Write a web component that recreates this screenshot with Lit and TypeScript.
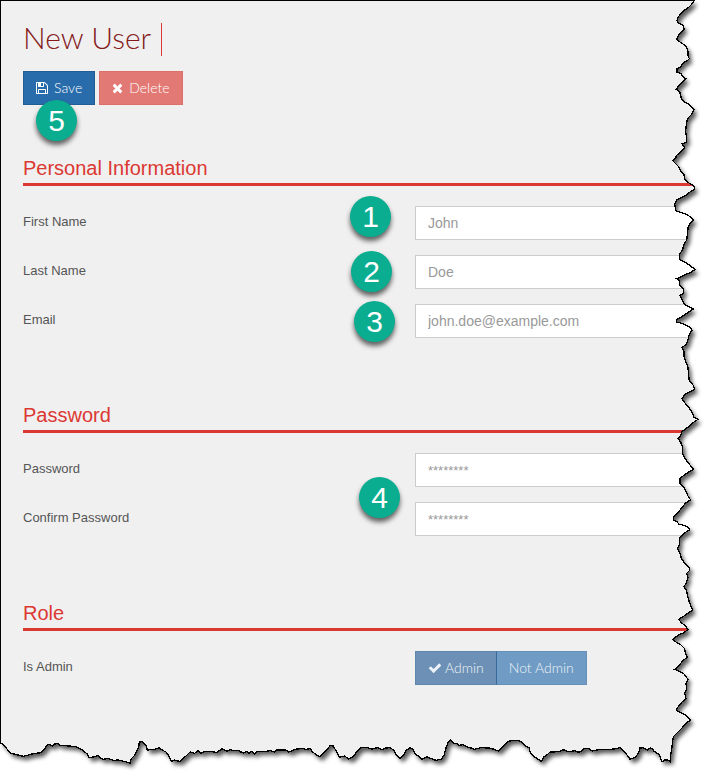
import { LitElement, html, css, svg } from "lit";
import { customElement, property, state } from "lit/decorators.js";

type IconName = "save" | "times" | "check";

const ICONS: Record<IconName, { width: number; path: string }> = {
  save: {
    width: 1536,
    path: "M384 0h768v384h-768v-384zM1280 0h128v896q0 14 -10 38.5t-20 34.5l-281 281q-10 10 -34 20t-39 10v-416q0 -40 -28 -68t-68 -28h-576q-40 0 -68 28t-28 68v416h-128v-1280h128v416q0 40 28 68t68 28h832q40 0 68 -28t28 -68v-416zM896 928v320q0 13 -9.5 22.5t-22.5 9.5h-192q-13 0 -22.5 -9.5t-9.5 -22.5v-320q0 -13 9.5 -22.5t22.5 -9.5h192q13 0 22.5 9.5t9.5 22.5zM1536 896v-928q0 -40 -28 -68t-68 -28h-1344q-40 0 -68 28t-28 68v1344q0 40 28 68t68 28h928q40 0 88 -20t76 -48l280 -280q28 -28 48 -76t20 -88z",
  },
  times: {
    width: 1408,
    path: "M1298 214q0 -40 -28 -68l-136 -136q-28 -28 -68 -28t-68 28l-294 294l-294 -294q-28 -28 -68 -28t-68 28l-136 136q-28 28 -28 68t28 68l294 294l-294 294q-28 28 -28 68t28 68l136 136q28 28 68 28t68 -28l294 -294l294 294q28 28 68 28t68 -28l136 -136q28 -28 28 -68t-28 -68l-294 -294l294 -294q28 -28 28 -68z",
  },
  check: {
    width: 1792,
    path: "M1671 970q0 -40 -28 -68l-724 -724l-136 -136q-28 -28 -68 -28t-68 28l-136 136l-362 362q-28 28 -28 68t28 68l136 136q28 28 68 28t68 -28l294 -295l656 657q28 28 68 28t68 -28l136 -136q28 -28 28 -68z",
  },
};

@customElement("glyph-icon")
class GlyphIcon extends LitElement {
  @property() name: IconName = "save";

  static styles = css`
    :host {
      display: inline-flex;
    }
    .glyph {
      height: 12px;
      fill: currentColor;
    }
  `;

  render() {
    const icon = ICONS[this.name];
    return html`<svg class="glyph" viewBox="0 -1408 ${icon.width} 1536" aria-hidden="true">
      <path transform="scale(1,-1)" d=${icon.path} />
    </svg>`;
  }
}

/* Outline of the torn sheet, in thirds of a pixel; each strip has its own origin. */
const STRIPS: { x: number; y: number; points: string }[] = [
  {
    x: 1962,
    y: 0,
    points:
      "120,1 114,12 104,22 90,32 78,44 72,52 69,62 74,70 88,76 90,88 78,100 70,112 69,120 78,126 90,134 99,144 102,154 102,168 106,176 100,182 90,186 80,200 69,206 69,216 82,222 86,230 96,236 86,246 76,256 66,268 76,274 80,284 82,298 92,306 106,314 120,328 114,342 102,354 98,366 96,384 94,396 98,408 98,426 84,432 92,442 82,454 68,466 64,476 56,482 66,492 74,500 80,514 90,524 92,536 100,546 120,558 122,568 108,576 96,586 80,594 68,600 62,614 66,632 82,638 100,644 120,660 108,670 102,684 100,704 98,720 90,732 86,748 76,764 76,776",
  },
  {
    x: 1962,
    y: 780,
    points:
      "78,0 96,8 110,18 124,29 108,38 90,46 68,56 76,62 76,74 88,86 88,100 78,106 84,118 90,132 104,140 118,147 104,156 92,164 78,174 68,178 68,186 84,190 96,196 110,202 114,212 106,222 102,240 96,254 84,262 90,274 90,290 96,306 102,322 104,346 106,362 118,376 122,388 106,396 92,404 84,416 92,428 106,444 116,460 120,472 132,478 120,486 106,498 94,508 84,514 80,526 72,536 80,546 86,562 86,580 92,594 104,610 112,620 118,628 104,636 90,646 78,654 78,670 88,680 96,694 102,708 110,720 96,728 84,742 72,758 58,770",
  },
  {
    x: 1962,
    y: 1560,
    points:
      "58,0 70,6 74,12 90,16 104,22 108,30 96,36 84,46 76,54 76,76 70,86 78,100 82,114 92,130 106,142 106,152 98,160 102,172 96,190 90,200 98,212 100,226 106,246 116,270 104,278 90,288 74,298 82,308 92,316 102,328 90,338 72,346 56,358 66,366 80,374 92,386 94,400 100,412 86,422 76,436 62,448 76,454 90,462 102,478 96,490 98,506 92,520 96,536 84,546 74,558 66,570 80,578 96,586 110,600 96,610 84,624 72,636 58,650 54,680 50,706",
  },
  {
    x: 1422,
    y: 2190,
    points:
      "588,95 582,90 572,90 564,95 556,74 540,64 536,56 528,54 520,60 508,53 498,54 494,68 484,82 468,88 460,76 448,62 438,53 426,56 412,58 380,58 368,60 354,63 344,56 330,56 322,64 312,67 304,62 292,64 280,65 270,59 256,64 240,66 228,66 220,74 210,80 202,94 192,88 176,76 168,66 166,54 154,48 140,34 130,31 120,31 104,34 92,44 82,54 74,63 60,58 46,54 20,53 0,58",
  },
  {
    x: 720,
    y: 2190,
    points:
      "700,56 680,50 668,44 656,46 650,40 640,40 632,29 624,38 618,54 612,76 604,87 588,91 574,86 560,80 546,88 538,80 526,74 520,58 510,53 498,62 490,76 480,85 470,76 462,60 448,53 438,54 426,60 412,53 396,57 382,53 362,53 350,66 340,80 326,87 314,78 298,82 290,66 280,48 270,47 262,58 250,70 240,81 228,74 216,64 212,56 196,58 186,55 166,58 156,63 146,66 138,60 126,60 108,60 104,66 92,62 76,64 50,64 44,72 36,64 26,70 20,64 12,69 0,65",
  },
  {
    x: 0,
    y: 2190,
    points:
      "718,62 700,62 690,58 682,64 666,56 650,68 634,64 616,64 604,70 594,62 584,70 570,66 558,78 546,88 540,95 524,90 514,94 508,80 498,66 486,60 478,53 464,58 442,60 438,46 426,35 418,36 416,52 404,76 394,86 390,100 376,95 356,90 340,91 324,85 310,88 298,82 294,76 284,80 266,83 262,72 244,58 228,50 206,48 180,46 174,40 164,42 158,48 150,44 142,44 136,54 122,68 96,72 70,79 50,74 30,69 22,58 8,42 2,40",
  },
];

const SHEET =
  "M1.5 1.5L" +
  STRIPS.map(({ x, y, points }) =>
    points
      .split(" ")
      .map((pair) => {
        const [px, py] = pair.split(",").map(Number);
        return `${x + px} ${y + py}`;
      })
      .join("L"),
  ).join("L") +
  "Z";

const OUTSIDE = `M-60 -60H2202V2400H-60Z${SHEET}`;

@customElement("torn-edge")
class TornEdge extends LitElement {
  static styles = css`
    :host {
      display: block;
      position: absolute;
      inset: 0;
      pointer-events: none;
    }
    .sheet {
      display: block;
      width: 100%;
      height: 100%;
    }
    .outside {
      fill: #fff;
      fill-rule: evenodd;
    }
    .outside-clip {
      clip-rule: evenodd;
    }
    .shadow {
      fill: #000;
      fill-opacity: 0.65;
    }
    .outline {
      fill: none;
      stroke: #000;
      stroke-width: 4;
      shape-rendering: crispEdges;
    }
  `;

  render() {
    return html`<svg class="sheet" viewBox="0 0 2142 2340" preserveAspectRatio="none" aria-hidden="true">
      ${svg`
        <defs>
          <clipPath id="outside"><path class="outside-clip" d=${OUTSIDE} /></clipPath>
          <filter id="soft" x="-5%" y="-5%" width="110%" height="110%">
            <feGaussianBlur stdDeviation="7" />
          </filter>
        </defs>
        <path class="outside" d=${OUTSIDE} />
        <g clip-path="url(#outside)">
          <path class="shadow" d=${SHEET} transform="translate(9 12)" filter="url(#soft)" />
        </g>
        <path class="outline" d=${SHEET} />
      `}
    </svg>`;
  }
}

@customElement("app-root")
class AppRoot extends LitElement {
  @state() private admin = true;

  static styles = css`
    :host {
      display: block;
      position: relative;
      overflow: hidden;
      background: #f0f0f0;
      color: #555;
      font: 13px/18px "Liberation Sans", Arial, sans-serif;
    }
    .page {
      padding: 23px 5px 95px 23px;
    }
    .header {
      display: flex;
    }
    .title {
      margin: 0;
      padding: 0 10px 4px 0;
      border-right: 1px solid #dc3832;
      color: #851a1a;
      font: 300 30px/29px Lato, sans-serif;
    }
    .toolbar {
      display: flex;
      gap: 4px;
      margin-top: 15px;
      position: relative;
    }
    .button {
      display: inline-flex;
      align-items: center;
      gap: 6px;
      box-sizing: border-box;
      height: 34px;
      margin: 0;
      padding: 0 12px;
      border: 1px solid;
      border-radius: 0;
      color: #fff;
      font: 300 14px/20px Lato, sans-serif;
      white-space: nowrap;
    }
    .save {
      background: #286cab;
      border-color: #225e96;
    }
    .delete {
      background: #e37974;
      border-color: #dc706b;
    }
    .section {
      margin-top: 65px;
    }
    .toolbar + .section {
      margin-top: 51px;
    }
    .heading {
      margin: 0 0 20px;
      padding-bottom: 3px;
      border-bottom: 3px solid #dc3832;
      color: #dc3832;
      font-weight: 400;
      font-size: 20px;
      line-height: 24px;
    }
    .row {
      display: grid;
      grid-template-columns: 4fr 3fr;
      align-items: start;
      position: relative;
    }
    .row + .row {
      margin-top: 15px;
    }
    .label {
      padding-top: 7px;
    }
    .field {
      box-sizing: border-box;
      width: 100%;
      height: 34px;
      margin: 0;
      padding: 6px 12px;
      border: 1px solid #ccc;
      border-radius: 0;
      background: #fff;
      color: #555;
      font: 14px/20px "Liberation Sans", Arial, sans-serif;
    }
    .field::placeholder {
      color: #999;
      opacity: 1;
    }
    .field[type="password"] {
      font-size: 13px;
    }
    .toggle {
      display: flex;
    }
    .option {
      gap: 3px;
      background: #6f9bc4;
      border-color: #6590ba;
      color: #edf3f8;
    }
    .option + .option {
      border-left: 0;
    }
    .option.on {
      background: #6d91b6;
      border-color: #5f86ad;
      border-right-color: #3a6a9a;
    }
    .step {
      position: absolute;
      width: 41px;
      height: 41px;
      border-radius: 50%;
      background: #0aad8f;
      box-shadow: 0 4px 5px rgba(0, 0, 0, 0.6);
      color: #fff;
      font-size: 30px;
      line-height: 41px;
      text-align: center;
    }
    .step-1 {
      top: -10px;
      left: 327px;
    }
    .step-2 {
      top: -4px;
      left: 328px;
    }
    .step-3 {
      top: -3px;
      left: 331px;
    }
    .step-4 {
      top: 24px;
      left: 336px;
    }
    .step-5 {
      top: 29px;
      left: 13px;
    }
  `;

  private row(id: string, label: string, type: string, placeholder: string, step?: number) {
    return html`<div class="row">
      <label class="label" for=${id}>${label}</label>
      <input class="field" id=${id} type=${type} placeholder=${placeholder} />
      ${step ? html`<span class="step step-${step}">${step}</span>` : ""}
    </div>`;
  }

  private option(label: string, value: boolean) {
    const on = this.admin === value;
    return html`<button
      class="button option ${on ? "on" : ""}"
      type="button"
      aria-pressed=${on}
      @click=${() => (this.admin = value)}
    >
      ${on ? html`<glyph-icon name="check"></glyph-icon>` : ""}<span>${label}</span>
    </button>`;
  }

  render() {
    return html`
      <main class="page">
        <header class="header"><h1 class="title">New User</h1></header>
        <div class="toolbar">
          <button class="button save" type="button"><glyph-icon name="save"></glyph-icon>Save</button>
          <button class="button delete" type="button"><glyph-icon name="times"></glyph-icon>Delete</button>
          <span class="step step-5">5</span>
        </div>
        <section class="section">
          <h2 class="heading">Personal Information</h2>
          ${this.row("first", "First Name", "text", "John", 1)}
          ${this.row("last", "Last Name", "text", "Doe", 2)}
          ${this.row("email", "Email", "email", "john.doe@example.com", 3)}
        </section>
        <section class="section">
          <h2 class="heading">Password</h2>
          ${this.row("password", "Password", "password", "********", 4)}
          ${this.row("confirm", "Confirm Password", "password", "********")}
        </section>
        <section class="section">
          <h2 class="heading">Role</h2>
          <div class="row">
            <span class="label" id="admin-label">Is Admin</span>
            <div class="toggle" role="group" aria-labelledby="admin-label">
              ${this.option("Admin", true)}${this.option("Not Admin", false)}
            </div>
          </div>
        </section>
      </main>
      <torn-edge></torn-edge>
    `;
  }
}
